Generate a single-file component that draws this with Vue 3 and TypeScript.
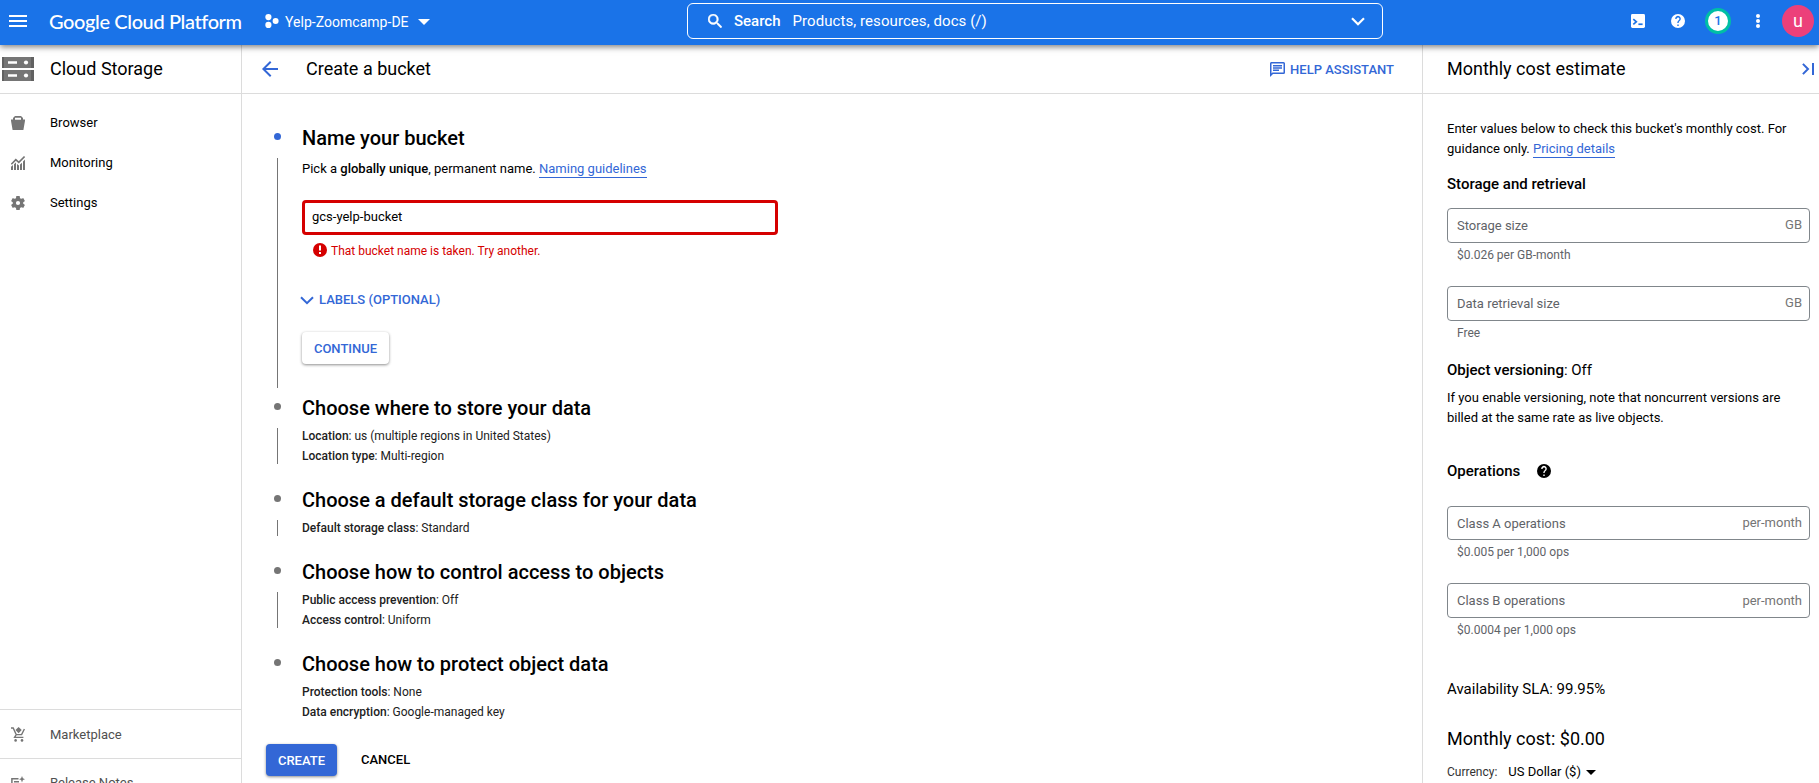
<script setup lang="ts">
import { ref } from 'vue'

interface Fact { label: string; value: string }
interface Step { title: string; facts: Fact[] }
interface CostField { label: string; unit: string; hint: string }

const bucketName = ref('gcs-yelp-bucket')

const steps: Step[] = [
  {
    title: 'Choose where to store your data',
    facts: [
      { label: 'Location', value: 'us (multiple regions in United States)' },
      { label: 'Location type', value: 'Multi-region' },
    ],
  },
  {
    title: 'Choose a default storage class for your data',
    facts: [{ label: 'Default storage class', value: 'Standard' }],
  },
  {
    title: 'Choose how to control access to objects',
    facts: [
      { label: 'Public access prevention', value: 'Off' },
      { label: 'Access control', value: 'Uniform' },
    ],
  },
  {
    title: 'Choose how to protect object data',
    facts: [
      { label: 'Protection tools', value: 'None' },
      { label: 'Data encryption', value: 'Google-managed key' },
    ],
  },
]

const storageFields: CostField[] = [
  { label: 'Storage size', unit: 'GB', hint: '$0.026 per GB-month' },
  { label: 'Data retrieval size', unit: 'GB', hint: 'Free' },
]
const operationFields: CostField[] = [
  { label: 'Class A operations', unit: 'per-month', hint: '$0.005 per 1,000 ops' },
  { label: 'Class B operations', unit: 'per-month', hint: '$0.0004 per 1,000 ops' },
]
</script>

<template>
  <div class="console">
    <header class="topbar">
      <svg class="menu" width="18" height="12" viewBox="0 0 18 12"><path d="M0 0h18v2H0zM0 5h18v2H0zM0 10h18v2H0z" fill="#fff" /></svg>
      <div class="brand">Google Cloud Platform</div>
      <svg class="project-icon" width="14" height="14" viewBox="0 0 14 14" fill="#fff">
        <circle cx="3.4" cy="3.1" r="3.1" /><circle cx="3.4" cy="10.9" r="3.1" /><circle cx="10.6" cy="7" r="3" />
      </svg>
      <div class="project">Yelp-Zoomcamp-DE</div>
      <svg class="project-caret" width="12" height="6" viewBox="0 0 12 6"><path d="M0 0h12L6 6z" fill="#fff" /></svg>
      <div class="search">
        <svg width="14" height="14" viewBox="3 3 17.5 17.5" fill="#fff"><path d="M15.5 14h-.79l-.28-.27A6.47 6.47 0 0 0 16 9.5 6.5 6.5 0 1 0 9.5 16c1.61 0 3.09-.59 4.23-1.57l.27.28v.79l5 4.99L20.49 19l-4.99-5zm-6 0C7.01 14 5 11.99 5 9.5S7.01 5 9.5 5 14 7.01 14 9.5 11.99 14 9.5 14z" stroke="#fff" stroke-width=".6" /></svg>
        <b>Search</b>
        <span>Products, resources, docs (/)</span>
        <svg class="search-chevron" width="14" height="9" viewBox="0 0 14 9"><path d="M1 1.2l6 6 6-6" fill="none" stroke="#fff" stroke-width="2.2" /></svg>
      </div>
      <div class="tools">
        <svg width="14" height="14" viewBox="0 0 14 14"><rect width="14" height="14" rx="1.4" fill="#fff" /><path d="M2.3 5.2l3 2.6-3 2.6" fill="none" stroke="#1a73e8" stroke-width="1.7" /><path d="M7.4 9.4h4.2v1.7H7.4z" fill="#1a73e8" /></svg>
        <svg width="14" height="14" viewBox="2 2 20 20" fill="#fff"><path d="M12 2a10 10 0 1 0 0 20 10 10 0 0 0 0-20zm1 17h-2v-2h2v2zm2.07-7.75l-.9.92C13.45 12.9 13 13.5 13 15h-2v-.5c0-1.1.45-2.1 1.17-2.83l1.24-1.26A2 2 0 1 0 10 9H8a4 4 0 1 1 7.07 2.25z" /></svg>
        <div class="count">1</div>
        <svg width="4" height="14" viewBox="0 0 4 14" fill="#fff"><circle cx="2" cy="2" r="2" /><circle cx="2" cy="7" r="2" /><circle cx="2" cy="12" r="2" /></svg>
        <div class="avatar">u</div>
      </div>
    </header>

    <div class="body">
      <aside class="sidebar">
        <div class="bar product">
          <svg width="32" height="24" viewBox="0 0 32 24">
            <path d="M0 0h32v11H0zM0 13h32v11H0z" fill="#757575" />
            <path d="M0 0h2v11H0zM29 0h3v11h-3zM0 13h2v11H0zM29 13h3v11h-3z" fill="#616161" />
            <path d="M6 4.2h9v2.6H6zM6 17.2h9v2.6H6z" fill="#fff" /><circle cx="24" cy="5.5" r="2.1" fill="#fff" /><circle cx="24" cy="18.5" r="2.1" fill="#fff" />
          </svg>
          <span>Cloud Storage</span>
        </div>
        <nav class="nav">
          <a>
            <svg width="14" height="14" viewBox="0 0 14 14" fill="#757575"><path d="M4 0h6l2 2v1.6H14v1.2L12.4 14H1.6L0 4.8V3.6h2V2zM4 1.7v2h6v-2z" fill-rule="evenodd" /></svg>
            <span>Browser</span>
          </a>
          <a>
            <svg width="14" height="14" viewBox="0 0 14 14"><g fill="#757575"><path d="M0 10.8L2 9v5H0zM3 8.2l2-1.8V14H3zM6 8l2 1.4V14H6zM9 8.6l2-1.8V14H9zM12 5.5L14 3.6V14h-2z" /></g><path d="M.3 8.3L4.8 3.6l3 2.8L13.6.5" fill="none" stroke="#757575" stroke-width="1.6" /></svg>
            <span>Monitoring</span>
          </a>
          <a>
            <svg width="14" height="14" viewBox="2 2 20 20" fill="#757575"><path d="M19.43 12.98c.04-.32.07-.64.07-.98s-.03-.66-.07-.98l2.11-1.65c.19-.15.24-.42.12-.64l-2-3.46c-.12-.22-.39-.3-.61-.22l-2.49 1c-.52-.4-1.08-.73-1.69-.98l-.38-2.65A.49.49 0 0 0 14 2h-4c-.25 0-.46.18-.49.42l-.38 2.65c-.61.25-1.17.59-1.69.98l-2.49-1c-.23-.09-.49 0-.61.22l-2 3.46c-.13.22-.07.49.12.64l2.11 1.65c-.04.32-.07.65-.07.98s.03.66.07.98l-2.11 1.65c-.19.15-.24.42-.12.64l2 3.46c.12.22.39.3.61.22l2.49-1c.52.4 1.08.73 1.69.98l.38 2.65c.03.24.24.42.49.42h4c.25 0 .46-.18.49-.42l.38-2.65c.61-.25 1.17-.59 1.69-.98l2.49 1c.23.09.49 0 .61-.22l2-3.46c.12-.22.07-.49-.12-.64l-2.11-1.65zM12 15a3 3 0 1 1 0-6 3 3 0 0 1 0 6z" /></svg>
            <span>Settings</span>
          </a>
        </nav>
        <div class="extras">
          <a>
            <svg width="14" height="15" viewBox="0 0 14 15"><path d="M7.6 0l3.1 3.1-3.1 3.1-3.1-3.1z" fill="#757575" /><path d="M0 1h2.2l3 6.6h5.4L13.4 2M5.2 7.6L3.6 10.4h8.8" fill="none" stroke="#757575" stroke-width="1.4" /><circle cx="4.6" cy="13.4" r="1.3" fill="#757575" /><circle cx="11" cy="13.4" r="1.3" fill="#757575" /></svg>
            <span>Marketplace</span>
          </a>
          <a class="release">
            <svg width="14" height="14" viewBox="0 0 14 14"><path d="M7.5 2.8H.9v8.4h9.4V8M3 5.8h5M3 8.3h5" fill="none" stroke="#757575" stroke-width="1.5" /><path d="M11 0l.9 2.3 2.1.9-2.1.9L11 6.4l-.9-2.3L8 3.2l2.1-.9z" fill="#757575" /></svg>
            <span>Release Notes</span>
          </a>
        </div>
      </aside>

      <main class="main">
        <div class="bar page-title">
          <svg width="16" height="16" viewBox="4 4 16 16" fill="#3367d6"><path d="M20 11H7.83l5.59-5.59L12 4l-8 8 8 8 1.41-1.41L7.83 13H20z" /></svg>
          <span class="heading">Create a bucket</span>
          <div class="assistant">
            <svg width="15" height="15" viewBox="2 2 20 20" fill="#3367d6"><path d="M4 4v13.17L5.17 16H20V4H4zm0-2h16a2 2 0 0 1 2 2v12a2 2 0 0 1-2 2H6l-4 4V4c0-1.1.9-2 2-2zm2 10h8v2H6v-2zm0-3h12v2H6V9zm0-3h12v2H6V6z" /></svg>
            <span>HELP ASSISTANT</span>
          </div>
        </div>

        <div class="steps">
          <section class="step first">
            <i class="dot active"></i>
            <h2>Name your bucket</h2>
            <i class="line"></i>
            <div class="content">
              <p class="intro">Pick a <b>globally unique</b>, permanent name. <a class="link">Naming guidelines</a></p>
              <input v-model="bucketName" class="name-input" type="text" spellcheck="false" />
              <div class="error">
                <svg width="14" height="14" viewBox="0 0 14 14"><circle cx="7" cy="7" r="7" fill="#d50000" /><path d="M6 2.6h2v5H6zM6 9h2v2H6z" fill="#fff" /></svg>
                <span>That bucket name is taken. Try another.</span>
              </div>
              <div class="labels">
                <svg width="14" height="9" viewBox="0 0 14 9"><path d="M1 1.2l6 6 6-6" fill="none" stroke="#3367d6" stroke-width="2" /></svg>
                <span>LABELS (OPTIONAL)</span>
              </div>
              <button class="continue">CONTINUE</button>
            </div>
          </section>

          <section v-for="step in steps" :key="step.title" class="step">
            <i class="dot"></i>
            <h2>{{ step.title }}</h2>
            <i class="line"></i>
            <div class="content facts">
              <p v-for="fact in step.facts" :key="fact.label"><b>{{ fact.label }}</b>: {{ fact.value }}</p>
            </div>
          </section>
        </div>

        <footer class="actions">
          <button class="create">CREATE</button>
          <button class="cancel">CANCEL</button>
        </footer>
      </main>

      <aside class="cost">
        <div class="bar cost-title">
          <span>Monthly cost estimate</span>
          <svg width="12" height="12" viewBox="0 0 12 12"><path d="M.9.9L6 6 .9 11.1M11 0v12" fill="none" stroke="#3367d6" stroke-width="2" /></svg>
        </div>
        <div class="cost-body">
          <p>Enter values below to check this bucket's monthly cost. For guidance only. <a class="link">Pricing details</a></p>
          <h3 class="storage-heading">Storage and retrieval</h3>
          <div v-for="field in storageFields" :key="field.label" class="field">
            <div class="box"><span>{{ field.label }}</span><span class="unit">{{ field.unit }}</span></div>
            <div class="hint">{{ field.hint }}</div>
          </div>
          <h3 class="versioning-heading">Object versioning<span>: Off</span></h3>
          <p class="versioning">If you enable versioning, note that noncurrent versions are billed at the same rate as live objects.</p>
          <h3 class="operations-heading">Operations
            <svg width="14" height="14" viewBox="2 2 20 20"><path d="M12 2a10 10 0 1 0 0 20 10 10 0 0 0 0-20zm1 17h-2v-2h2v2zm2.07-7.75l-.9.92C13.45 12.9 13 13.5 13 15h-2v-.5c0-1.1.45-2.1 1.17-2.83l1.24-1.26A2 2 0 1 0 10 9H8a4 4 0 1 1 7.07 2.25z" /></svg>
          </h3>
          <div v-for="field in operationFields" :key="field.label" class="field operation">
            <div class="box"><span>{{ field.label }}</span><span class="unit">{{ field.unit }}</span></div>
            <div class="hint">{{ field.hint }}</div>
          </div>
          <div class="sla">Availability SLA: 99.95%</div>
          <div class="total">Monthly cost: $0.00</div>
          <div class="currency">
            <span>Currency:</span><span class="value">US Dollar ($)</span>
            <svg width="10" height="5" viewBox="0 0 10 5"><path d="M0 0h10L5 5z" /></svg>
          </div>
        </div>
      </aside>
    </div>
  </div>
</template>

<style>
body { overflow: hidden; }
</style>

<style scoped>
* { box-sizing: border-box; }
.console { display: flex; flex-direction: column; height: 783px; overflow: hidden; background: #fff; color: #000; font: 400 13px/20px Roboto, "Noto Sans", sans-serif; }
p, h2, h3 { margin: 0; }
b { font-weight: 500; }
svg { display: block; flex: none; }
button { border: 0; border-radius: 4px; font: 500 13px/32px Roboto, sans-serif; }
.link { color: #3367d6; border-bottom: 1px solid #3367d6; padding-bottom: 1px; }

.topbar { position: relative; z-index: 2; flex: none; display: flex; align-items: center; height: 45px; padding: 0 5px 3px 9px; background: #1a73e8; color: #fff; box-shadow: 0 2px 6px rgba(0, 0, 0, .5); }
.brand { width: 194px; margin-left: 22px; font: 500 20px/24px Lato, sans-serif; letter-spacing: -.39px; white-space: nowrap; }
.project-icon { margin-left: 22px; }
.project { width: 124px; margin: 2px 0 0 6px; font-size: 14px; letter-spacing: .03px; white-space: nowrap; }
.project-caret { margin: 2px 0 0 9px; }
.search { display: flex; align-items: center; width: 696px; height: 36px; margin-left: 257px; padding: 0 17px 0 20px; border: 1px solid #fff; border-radius: 6px; font-size: 15px; white-space: nowrap; }
.search b { margin-left: 12px; }
.search span { margin-left: 12px; letter-spacing: .07px; }
.search-chevron { margin-left: auto; }
.tools { display: flex; align-items: center; margin-left: auto; }
.tools svg + svg { margin-left: 26px; }
.count { width: 26px; height: 26px; margin: 0 25px 0 20px; border: 3px solid #00bfa5; border-radius: 50%; background: #fff; color: #1a73e8; font: 500 13px/20px Roboto, sans-serif; text-align: center; }
.avatar { width: 32px; height: 32px; margin-left: 22px; border-radius: 50%; background: #ec407a; font-size: 18px; line-height: 31px; text-align: center; }

.body { display: flex; flex: 1; min-height: 0; }
.bar { display: flex; align-items: center; flex: none; height: 49px; border-bottom: 1px solid #dcdcdc; font-size: 18px; }
.sidebar { display: flex; flex-direction: column; width: 242px; border-right: 1px solid #dcdcdc; }
.product { padding-left: 2px; }
.product span { margin-left: 16px; }
.nav { padding-top: 9px; }
.nav a { display: flex; align-items: center; height: 40px; padding-left: 11px; }
.nav a span, .extras a span { margin-left: 25px; }
.extras { flex: none; height: 74px; margin-top: auto; color: #505050; }
.extras a { display: flex; align-items: center; height: 49px; padding: 1px 0 0 11px; border-top: 1px solid #dcdcdc; }
.extras .release { height: 47px; }

.main { display: flex; flex-direction: column; width: 1180px; }
.page-title { padding: 0 28px 0 20px; }
.heading { margin-left: 28px; }
.assistant { display: flex; align-items: center; margin: 1px 0 0 auto; color: #3367d6; font-size: 13px; font-weight: 500; }
.assistant span { margin-left: 5px; }
.steps { padding: 30px 0 0 31px; }
.step { display: grid; grid-template-columns: 8px 1fr; column-gap: 21px; grid-template-rows: 28px auto; margin-bottom: 20px; }
.dot { align-self: center; width: 7px; height: 7px; margin: 0 0 3px .5px; border-radius: 50%; background: #757575; }
.dot.active { background: #3367d6; }
.line { width: 1px; margin: 6px 0 2px 4px; background: #757575; }
.step:last-child .line { visibility: hidden; }
h2 { font: 500 20px/28px Roboto, sans-serif; }
.content { padding-top: 4px; }
.facts { color: #212121; font-size: 12px; }
.first .content { height: 238px; padding-top: 7px; }
.first { margin-bottom: 4px; }
.name-input { display: block; width: 476px; height: 35px; margin-top: 21px; padding: 0 7px 2px; border: 3px solid #d50000; border-radius: 4px; outline: 0; font: 400 13px/20px Roboto, sans-serif; color: #000; }
.error { display: flex; align-items: center; height: 20px; margin-top: 5px; padding-left: 10.5px; color: #d50000; font-size: 12px; }
.error svg { margin-bottom: 1px; }
.error span { margin: 2px 0 0 4.5px; }
.labels { display: flex; align-items: center; height: 20px; margin: 30px 0 0 -2px; color: #3367d6; font-weight: 500; }
.labels span { margin-left: 5px; }
.continue { display: block; width: 87px; height: 32px; margin-top: 22px; padding: 1px 0 0; background: #fff; color: #3367d6; box-shadow: 0 1px 3px rgba(0, 0, 0, .45); }
.actions { display: flex; padding: 2px 24px 0; }
.create { width: 71px; height: 32px; padding: 1px 0 0; background: #3367d6; color: #fff; box-shadow: 0 1px 3px rgba(0, 0, 0, .45); }
.cancel { margin-left: 24px; padding: 0; background: none; color: #000; }

.cost { flex: 1; border-left: 1px solid #dcdcdc; }
.cost-title { justify-content: space-between; padding: 0 5px 0 24px; }
.cost-body { padding: 25px 9px 0 24px; }
h3 { display: flex; align-items: center; height: 20px; font: 500 15px/20px Roboto, sans-serif; }
h3 span { font-weight: 400; }
h3 svg { margin-left: 17px; }
.storage-heading { margin: 15px 0 14px; }
.field { height: 78px; }
.box { display: flex; justify-content: space-between; align-items: center; height: 35px; padding: 0 7px 0 9px; border: 1px solid #80868b; border-radius: 4px; color: #5f6368; }
.unit { padding-bottom: 2px; color: #757575; }
.hint { padding: 2px 0 0 10px; color: #5f6368; font-size: 12px; }
.operation { height: 77px; }
.operation .box { height: 34px; padding-top: 2px; }
.operation + .operation .box { height: 35px; padding-top: 0; }
.operation + .operation .unit { padding-bottom: 0; }
.versioning-heading { margin-top: -4px; }
.versioning { margin-top: 8px; }
.operations-heading { margin: 33px 0 25px; }
.sla { margin-top: 19px; font-size: 15px; }
.total { margin-top: 28px; font-size: 18px; line-height: 24px; }
.currency { display: flex; align-items: center; margin-top: 11px; color: #333; font-size: 12px; }
.currency .value { margin-left: 11px; color: #000; font-size: 13px; }
.currency svg { margin-left: 5px; }
</style>
